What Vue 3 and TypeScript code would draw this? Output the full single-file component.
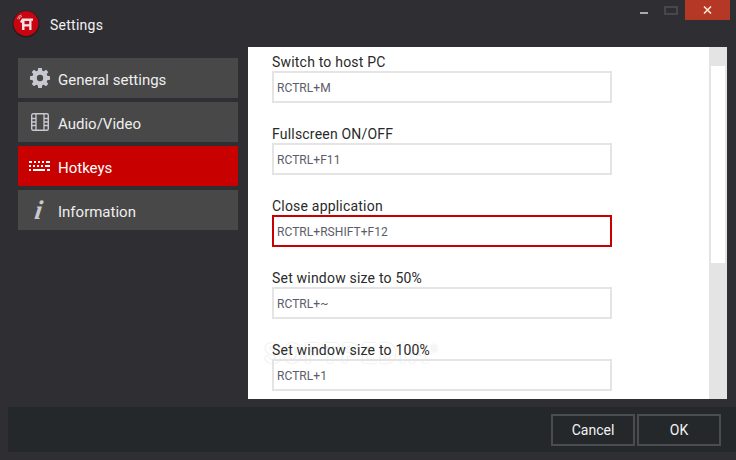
<script setup lang="ts">
const menu = [
  { id: 'gear', label: 'General settings', active: false },
  { id: 'film', label: 'Audio/Video', active: false },
  { id: 'keys', label: 'Hotkeys', active: true },
  { id: 'info', label: 'Information', active: false },
]
const fields = [
  { label: 'Switch to host PC', value: 'RCTRL+M', focus: false },
  { label: 'Fullscreen ON/OFF', value: 'RCTRL+F11', focus: false },
  { label: 'Close application', value: 'RCTRL+RSHIFT+F12', focus: true },
  { label: 'Set window size to 50%', value: 'RCTRL+~', focus: false },
  { label: 'Set window size to 100%', value: 'RCTRL+1', focus: false },
]
</script>

<template>
  <div class="window">
    <header class="titlebar">
      <svg class="logo" width="28" height="28" viewBox="0 0 28 28">
        <circle cx="14" cy="14" r="13.5" fill="#1f1f22" />
        <circle cx="14" cy="13.5" r="12.5" fill="#c70410" />
        <path d="M10 8.500h11v2.200h-1.500V20h-2.300v-3.500h-4.700V20H10v-7l-2-1z" fill="#f6e4e4" />
        <rect x="12.500" y="11" width="4.700" height="3.200" fill="#c70410" />
        <path d="M7 9.500a3 3 0 0 1 3-3M5.500 9a5 5 0 0 1 4-4" stroke="#f0a6a6" stroke-width="1" fill="none" />
      </svg>
      <span class="title">Settings</span>
      <div class="controls">
        <span class="min"></span>
        <span class="max"></span>
        <span class="close">
          <svg width="9" height="8" viewBox="0 0 9 8"><path d="M1 0.500l7 7M8 0.500l-7 7" stroke="#ffe6d2" stroke-width="1.600" fill="none" /></svg>
        </span>
      </div>
    </header>

    <div class="body">
      <nav class="side">
        <div v-for="m in menu" :key="m.id" class="item" :class="{ active: m.active }">
          <span class="icon">
            <svg v-if="m.id === 'gear'" width="20" height="20" viewBox="0 0 22 22">
              <path fill-rule="evenodd" fill="#c8c8d0" d="M9 0h4l.5 2.900 1.700.7 2.400-1.700 2.500 2.500-1.700 2.400.7 1.700L22 9v4l-2.900.5-.7 1.700 1.700 2.400-2.500 2.500-2.400-1.700-1.700.7L13 22H9l-.5-2.900-1.700-.7-2.400 1.700-2.500-2.500 1.700-2.400-.7-1.700L0 13V9l2.900-.5.7-1.700-1.700-2.400 2.500-2.500 2.400 1.700 1.700-.7zM11 7.500a3.500 3.500 0 1 0 0 7 3.500 3.500 0 0 0 0-7z" />
            </svg>
            <svg v-else-if="m.id === 'film'" width="18" height="18" viewBox="0 0 18 18">
              <rect x="0.700" y="0.700" width="16.600" height="16.600" rx="1.500" fill="none" stroke="#c8c8d0" stroke-width="1.400" />
              <path d="M5 1v16M13 1v16M1 5.500h4M1 9h4M1 12.500h4M13 5.500h4M13 9h4M13 12.500h4" stroke="#c8c8d0" stroke-width="1.300" fill="none" />
            </svg>
            <svg v-else-if="m.id === 'keys'" width="22" height="11" viewBox="0 0 22 11" shape-rendering="crispEdges">
              <path fill="#fff" d="M0 0h3v2H0zM5 0h2v2H5zM9 0h2v2H9zM13 0h2v2h-2zM17 0h4v2h-4zM0 4h2v2H0zM4 4h2v2H4zM8 4h2v2H8zM12 4h2v2h-2zM16 4h5v2h-5zM0 8h2v2H0zM4 8h12v2H4zM18 8h3v2h-3z" />
            </svg>
            <span v-else class="info-i">i</span>
          </span>
          <span class="item-label">{{ m.label }}</span>
        </div>
      </nav>

      <main class="panel">
        <div class="watermark">SOFTPEDIA<sup>®</sup></div>
        <div class="scroll-content">
          <div v-for="f in fields" :key="f.label" class="field">
            <div class="field-label">{{ f.label }}</div>
            <div class="input" :class="{ focus: f.focus }">{{ f.value }}</div>
          </div>
        </div>
        <div class="track"><div class="thumb"></div></div>
      </main>
    </div>

    <footer class="footer">
      <button class="btn" type="button">Cancel</button>
      <button class="btn" type="button">OK</button>
    </footer>
  </div>
</template>

<style>
html, body { margin: 0; background: #2f2e33; }
</style>

<style scoped>
.window {
  width: 736px;
  height: 460px;
  background: #2f2e33;
  display: flex;
  flex-direction: column;
  overflow: hidden;
  font-family: Roboto, "Liberation Sans", sans-serif;
  color: #fff;
}
.titlebar {
  height: 47px;
  display: flex;
  align-items: flex-start;
  flex-shrink: 0;
}
.logo { margin: 10px 0 0 12px; }
.title { margin: 16px 0 0 10px; font-size: 14px; line-height: 18px; letter-spacing: 0.25px; color: #f2f2f2; }
.controls { margin-left: auto; display: flex; align-items: flex-start; padding-right: 6px; }
.min { width: 8px; height: 2px; background: #a9a9b0; margin: 12px 0 0 0; }
.max { margin: 6px 0 0 16px; border: 2px solid #47474c; width: 10px; height: 5px; }
.close {
  width: 45px;
  height: 20px;
  margin-left: 7px;
  background: #b43825;
  display: flex;
  align-items: center;
  justify-content: center;
}
.body { display: flex; flex: 1; min-height: 0; }
.side {
  width: 220px;
  margin: 11px 0 0 18px;
  display: flex;
  flex-direction: column;
  gap: 4px;
}
.item {
  height: 40px;
  background: #484848;
  display: flex;
  align-items: center;
  font-size: 15px;
  color: #eee;
}
.item.active { background: #c80000; color: #fff; }
.icon { width: 40px; display: flex; justify-content: center; align-items: center; padding-left: 4px; box-sizing: border-box; }
.item-label { padding-top: 4px; line-height: 18px; }
.info-i {
  font-family: "Liberation Serif", serif;
  font-style: italic;
  font-weight: 700;
  font-size: 27px;
  line-height: 26px;
  color: #c8c8d0;
  margin-left: -3px;
  transform: skewX(-8deg);
}
.panel {
  position: relative;
  width: 479px;
  height: 352px;
  margin-left: 10px;
  background: #fff;
  display: flex;
  overflow: hidden;
}
.scroll-content { position: relative; flex: 1; padding: 0 0 0 24px; margin-top: 6px; min-width: 0; }
.field { height: 72px; }
.field-label { font-size: 14px; line-height: 18px; color: #2a2a2a; letter-spacing: 0.2px; }
.input {
  width: 340px;
  height: 32px;
  box-sizing: border-box;
  border: 2px solid #e4e4e4;
  padding-left: 3px;
  font-size: 12px;
  line-height: 30px;
  letter-spacing: 0.05px;
  color: #5c5c68;
}
.input.focus { border-color: #c80000; }
.track {
  position: relative;
  width: 18px;
  height: 100%;
  background: #e4e4e4;
  padding: 19px 2px 0;
  box-sizing: border-box;
  flex-shrink: 0;
}
.thumb { height: 197px; background: #fff; }
.watermark {
  position: absolute;
  left: 16px;
  top: 288px;
  font-size: 27px;
  font-weight: 700;
  letter-spacing: 2.500px;
  line-height: 30px;
  color: #fff;
  text-shadow: 0 0 2px rgba(0, 0, 0, 0.18);
  pointer-events: none;
}
.watermark sup { font-size: 10px; font-weight: 400; letter-spacing: 0; }
.footer {
  height: 45px;
  margin: 8px 0 8px 8px;
  background: #24282b;
  flex-shrink: 0;
  display: flex;
  justify-content: flex-end;
  align-items: center;
  gap: 2px;
  padding-right: 15px;
}
.btn {
  width: 84px;
  height: 32px;
  background: #24282b;
  border: 2px solid #4b4c52;
  color: #f2f2f2;
  font-family: inherit;
  font-size: 14px;
  padding: 0;
}
</style>
